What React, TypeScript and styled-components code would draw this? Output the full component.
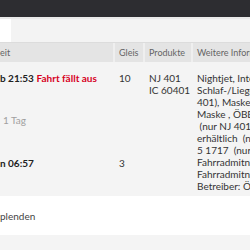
import React from 'react';
import styled, { createGlobalStyle } from 'styled-components';

const GlobalStyle = createGlobalStyle`
    html, body {
        margin: 0;
        padding: 0;
        background: #f4f4f4;
        overflow: hidden;
    }
    body {
        font-family: Lato, 'Open Sans', sans-serif;
        font-size: 10px;
        color: #333;
    }
`;

const infoLines: ReadonlyArray<string> = [
    'Nightjet, Intercity, Sitzwagen,',
    'Schlaf-/Liegewagen (nur NJ',
    '401), Maskenpflicht: FFP2-',
    'Maske , ÖBB Kundenservice',
    ' (nur NJ 401), Fahrkarten',
    'erhältlich  (nur NJ 401), Tel.',
    '5 1717  (nur NJ 401),',
    'Fahrradmitnahme begrenzt',
    'Fahrradmitnahme reservierungspflichtig',
    'Betreiber: Österreichische Bundesbahnen',
];

const App = () => {
    return (
        <Page>
            <GlobalStyle />
            <TopBar />
            <TabStrip>
                <ActiveTab />
                <TabRest />
            </TabStrip>
            <Table>
                <HeaderRow>
                    <HeaderCell>eit</HeaderCell>
                    <HeaderCell>Gleis</HeaderCell>
                    <HeaderCell>Produkte</HeaderCell>
                    <HeaderCell>Weitere Informationen</HeaderCell>
                </HeaderRow>
                <ConnectionRow>
                    <TimeCell>
                        <div>
                            <Strong>b 21:53</Strong>{' '}
                            <Cancelled>Fahrt fällt aus</Cancelled>
                        </div>
                        <Duration>1 Tag</Duration>
                        <Arrival gap={31}>
                            <Strong>n 06:57</Strong>
                        </Arrival>
                    </TimeCell>
                    <Cell>
                        <div>10</div>
                        <Arrival gap={73}>3</Arrival>
                    </Cell>
                    <Cell>
                        <div>NJ 401</div>
                        <div>IC 60401</div>
                    </Cell>
                    <Cell>
                        {infoLines.map((text, index) => (
                            <InfoLine key={index}>{text}</InfoLine>
                        ))}
                    </Cell>
                </ConnectionRow>
                <ToggleRow>plenden</ToggleRow>
            </Table>
        </Page>
    );
};

const Page = styled.div`
    width: 250px;
    height: 250px;
    overflow: hidden;
    background: #f4f4f4;
`;

const TopBar = styled.div`
    height: 17px;
    background: #2d2d31;
    border-bottom: 2px solid #e9e9e9;
`;

const TabStrip = styled.div`
    display: flex;
    height: 23px;
    border-bottom: 1px solid #dcdcdc;
`;

const ActiveTab = styled.div`
    width: 11px;
    background: #ffffff;
`;

const TabRest = styled.div`
    flex: 1;
    background: #f3f3f3;
`;

const Table = styled.div`
    display: flex;
    flex-direction: column;
    width: 420px;
`;

const columns = '113px 30px 48px 1fr';

const HeaderRow = styled.div`
    display: grid;
    grid-template-columns: ${columns};
    height: 19px;
    background: #e4e4e4;
`;

const HeaderCell = styled.div`
    display: flex;
    align-items: center;
    padding-left: 4px;
    font-size: 9px;
    color: #646464;
    border-left: 2px solid #efefef;
    white-space: nowrap;
    &:first-child {
        border-left: none;
        padding-left: 0;
    }
`;

const ConnectionRow = styled.div`
    display: grid;
    grid-template-columns: ${columns};
    padding: 10px 0 4px;
    background: #f4f4f4;
    line-height: 12px;
`;

const Cell = styled.div`
    padding-left: 6px;
    white-space: pre;
`;

const TimeCell = styled.div`
    white-space: nowrap;
`;

const Strong = styled.span`
    font-weight: 700;
    color: #222;
`;

const Cancelled = styled.span`
    font-weight: 700;
    color: #d7001e;
`;

const Duration = styled.div`
    margin-top: 30px;
    padding-left: 3px;
    color: #a0a0a0;
`;

const Arrival = styled.div<{ gap: number }>`
    margin-top: ${({ gap }) => gap}px;
`;

const InfoLine = styled.div`
    white-space: pre;
`;

const ToggleRow = styled.div`
    display: flex;
    align-items: center;
    height: 39px;
    background: #ffffff;
    color: #444;
`;

export default App;
